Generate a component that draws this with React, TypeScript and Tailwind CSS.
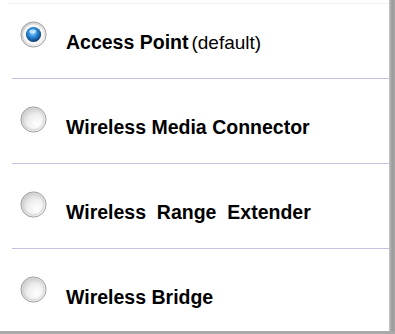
import React from "react";

function Radio({ checked }: { checked?: boolean }) {
  return (
    <svg width="27" height="27" viewBox="0 0 27 27" className="shrink-0">
      <defs>
        <linearGradient id={checked ? "rgA" : "rgB"} x1="0" y1="0" x2="1" y2="1">
          <stop offset="0" stopColor="#c8c8c8" />
          <stop offset="1" stopColor="#f6f6f6" />
        </linearGradient>
        <radialGradient id="blueBall" cx="0.45" cy="0.38" r="0.62">
          <stop offset="0" stopColor="#9ad8ff" />
          <stop offset="0.45" stopColor="#2f8fdc" />
          <stop offset="0.85" stopColor="#10508f" />
          <stop offset="1" stopColor="#0a2f5c" />
        </radialGradient>
        <radialGradient id="greyIn" cx="0.65" cy="0.7" r="0.75">
          <stop offset="0" stopColor="#ffffff" />
          <stop offset="0.6" stopColor="#eeeeee" />
          <stop offset="1" stopColor="#d2d2d2" />
        </radialGradient>
      </defs>
      <circle cx="13.5" cy="13.5" r="12.6" fill={checked ? "url(#rgA)" : "url(#rgB)"} stroke="#a2a2a2" strokeWidth="1" />
      {checked ? (
        <>
          <circle cx="13.5" cy="13.5" r="10.2" fill="#f7f7f7" />
          <circle cx="13.5" cy="13.5" r="7.6" fill="url(#blueBall)" />
          <ellipse cx="12.8" cy="10.5" rx="3.4" ry="1.9" fill="#d9f1ff" opacity="0.75" />
        </>
      ) : (
        <circle cx="13.5" cy="13.5" r="10.3" fill="url(#greyIn)" stroke="#d0d0d0" strokeWidth="0.8" />
      )}
    </svg>
  );
}

function Row({
  checked,
  children,
  first,
  last,
}: {
  checked?: boolean;
  children: React.ReactNode;
  first?: boolean;
  last?: boolean;
}) {
  return (
    <div
      className={
        "flex items-start pl-[20px] " +
        (first ? "h-[74px] pt-[17px]" : last ? "h-[82px] pt-[27px]" : "h-[84px] pt-[27px]")
      }
    >
      <Radio checked={checked} />
      <div className="ml-[19px] mt-[12px] leading-none text-[19.5px] text-black whitespace-pre">
        {children}
      </div>
    </div>
  );
}

export default function App() {
  return (
    <div className="flex w-[395px] h-[334px] flex-col bg-[#a9a9a9]">
      <div className="flex flex-1">
        <div className="w-[389px] h-[331px] bg-white font-['Liberation_Sans',Arial,sans-serif]">
          <div className="pt-[3px]">
            <div className="ml-[8px] border-t border-[#efefef]" />
          </div>
          <Row checked first>
            <span className="font-bold">Access Point</span>
            <span className="font-normal ml-[3px] text-[19px]">(default)</span>
          </Row>
          <div className="ml-[12px] border-t border-[#c3c1e4]" />
          <Row>
            <span className="font-bold">Wireless Media Connector</span>
          </Row>
          <div className="ml-[12px] border-t border-[#c3c1e4]" />
          <Row>
            <span className="font-bold">Wireless  Range  Extender</span>
          </Row>
          <div className="ml-[12px] border-t border-[#c3c1e4]" />
          <Row last>
            <span className="font-bold">Wireless Bridge</span>
          </Row>
        </div>
        <div className="w-[6px] h-[331px] bg-gradient-to-r from-[#c4c4c4] via-[#9c9c9c] to-[#a6a6a6]" />
      </div>
    </div>
  );
}
